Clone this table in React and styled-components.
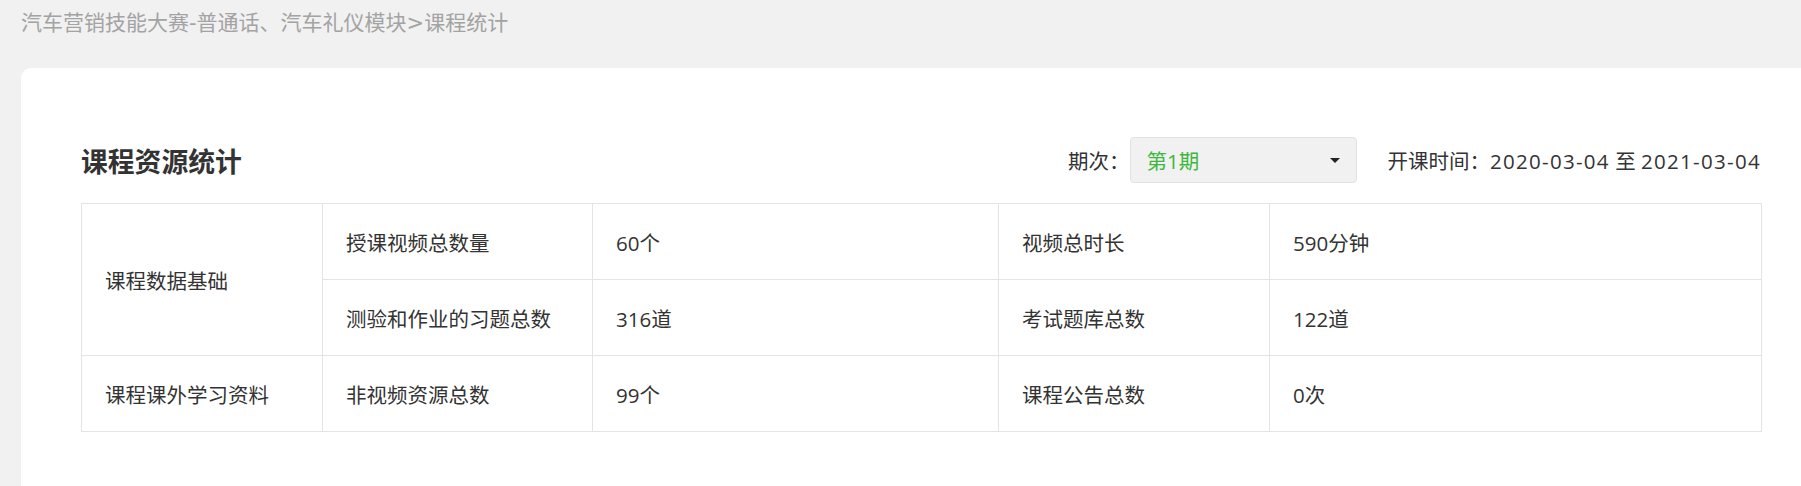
import React from "react";
import styled, { createGlobalStyle } from "styled-components";

const GlobalStyle = createGlobalStyle`
  html, body {
    margin: 0;
    padding: 0;
    background: #f1f1f1;
    overflow: hidden;
  }
  body {
    font-family: "Open Sans", "Noto Sans CJK SC", sans-serif;
    color: #333;
  }
`;

const Page = styled.div`
  min-height: 486px;
  display: flex;
  flex-direction: column;
`;

const Breadcrumb = styled.div`
  padding: 8px 21px 29px;
  font-family: "DejaVu Sans", "Noto Sans CJK SC", sans-serif;
  font-size: 21px;
  line-height: 31px;
  color: #a3a3a3;
`;

const Card = styled.div`
  flex: 1;
  margin: 0 -40px 0 21px;
  padding: 69px 0 55px 60px;
  background: #fff;
  border-radius: 10px 0 0 0;
`;

const Content = styled.div`
  width: 1680px;
`;

const Header = styled.div`
  display: flex;
  align-items: center;
  justify-content: space-between;
  height: 46px;
  margin-bottom: 20px;
`;

const Title = styled.h2`
  margin: 0;
  font-size: 26.8px;
  font-weight: 700;
  color: #333;
`;

const Filters = styled.div`
  display: flex;
  align-items: center;
  font-size: 20.5px;
  color: #333;
`;

const Label = styled.span`
  margin-right: 1px;
`;

const Select = styled.div`
  box-sizing: border-box;
  width: 227px;
  height: 46px;
  display: flex;
  align-items: center;
  justify-content: space-between;
  padding: 0 16px 0 15px;
  background: #f1f1f1;
  border: 1px solid #e2e2e2;
  border-radius: 4px;
  color: #3db83d;
  margin-right: 30px;
`;

const Caret = styled.span`
  width: 0;
  height: 0;
  border-left: 5px solid transparent;
  border-right: 5px solid transparent;
  border-top: 5px solid #222;
`;

const Date = styled.span`
  letter-spacing: 1.3px;
`;

const Table = styled.table`
  width: 100%;
  border-collapse: collapse;
  table-layout: fixed;
  font-size: 20.5px;
  color: #333;
`;

const Cell = styled.td`
  height: 75px;
  padding: 0 0 0 23px;
  border: 1px solid #e4e4e4;
  text-align: left;
  vertical-align: middle;
  white-space: nowrap;
`;

const widths = [241, 270, 406, 271, 492];

const rows = [
  { group: "课程数据基础", span: 2, cells: ["授课视频总数量", "60个", "视频总时长", "590分钟"] },
  { cells: ["测验和作业的习题总数", "316道", "考试题库总数", "122道"] },
  { group: "课程课外学习资料", span: 1, cells: ["非视频资源总数", "99个", "课程公告总数", "0次"] }
];

export default function App() {
  return (
    <Page>
      <GlobalStyle />
      <Breadcrumb>汽车营销技能大赛-普通话、汽车礼仪模块&gt;课程统计</Breadcrumb>
      <Card>
        <Content>
          <Header>
            <Title>课程资源统计</Title>
            <Filters>
              <Label>期次：</Label>
              <Select>
                <span>第1期</span>
                <Caret />
              </Select>
              <span>
                开课时间：<Date>2020-03-04</Date> 至 <Date>2021-03-04</Date>
              </span>
            </Filters>
          </Header>
          <Table>
            <colgroup>
              {widths.map((w, i) => (
                <col key={i} style={{ width: w }} />
              ))}
            </colgroup>
            <tbody>
              {rows.map((row, i) => (
                <tr key={i}>
                  {row.group && <Cell rowSpan={row.span}>{row.group}</Cell>}
                  {row.cells.map((c, j) => (
                    <Cell key={j}>{c}</Cell>
                  ))}
                </tr>
              ))}
            </tbody>
          </Table>
        </Content>
      </Card>
    </Page>
  );
}
